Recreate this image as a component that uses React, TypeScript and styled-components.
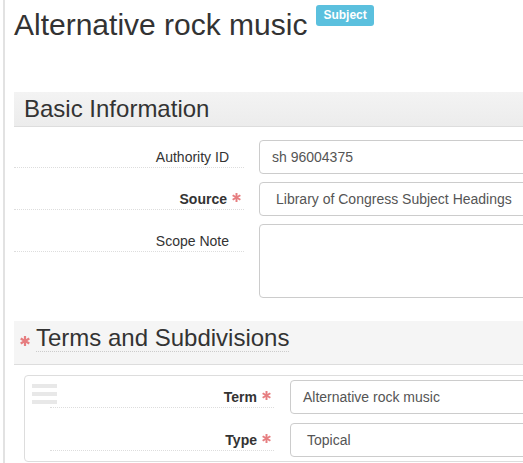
import styled, { createGlobalStyle } from "styled-components";

const GlobalStyle = createGlobalStyle`
  html, body {
    margin: 0;
    padding: 0;
    background: #fff;
    overflow: hidden;
  }
  body {
    font-family: "Liberation Sans", Arial, sans-serif;
    font-size: 14px;
    color: #333;
  }
`;

// clips the wide form at the window edge, like the original page
const Frame = styled.div`
  width: 100vw;
  height: 100vh;
  overflow: hidden;
`;

const Page = styled.div`
  margin-left: 3px;
  border-left: 2px solid #e2e2e2;
  padding: 5px 0 0 9px;
  width: 760px;
  min-height: 463px;
  box-sizing: border-box;
`;

const TitleRow = styled.div`
  display: flex;
  align-items: flex-start;
`;

const Title = styled.h2`
  margin: 3px 0 0;
  font-size: 30px;
  font-weight: normal;
  line-height: 33px;
  color: #333;
`;

const Badge = styled.span`
  margin-left: 9px;
  padding: 3px 7px 4px;
  line-height: 14px;
  font-size: 12px;
  font-weight: bold;
  color: #fff;
  background: #5bc0de;
  border-radius: 3px;
`;

const SectionHeader = styled.div<{ $tone: "basic" | "terms" }>`
  margin-top: ${(p) => (p.$tone === "basic" ? "51px" : "23px")};
  padding: ${(p) => (p.$tone === "basic" ? "4px 10px" : "4px 10px 12px 6px")};
  background: ${(p) =>
    p.$tone === "basic" ? "linear-gradient(#f3f3f3, #ececec)" : "#f5f5f5"};
  border-bottom: 1px solid #ddd;
  display: flex;
  align-items: baseline;
`;

const SectionTitle = styled.h3<{ $underline?: boolean }>`
  margin: 0;
  font-size: 24px;
  font-weight: normal;
  line-height: 26px;
  color: #333;
  border-bottom: ${(p) => (p.$underline ? "1px dotted #ccc" : "none")};
`;

const FormGrid = styled.div<{ $labelWidth: number; $gap: number; $rowGap: number }>`
  display: grid;
  grid-template-columns: ${(p) => p.$labelWidth}px 1fr;
  column-gap: ${(p) => p.$gap}px;
  row-gap: ${(p) => p.$rowGap}px;
`;

const BasicForm = styled(FormGrid)`
  padding-top: 13px;
`;

const Label = styled.label<{ $required?: boolean }>`
  align-self: start;
  padding: 7px ${(p) => (p.$required ? "3px" : "15px")} 0 0;
  line-height: 20px;
  text-align: right;
  font-weight: ${(p) => (p.$required ? "bold" : "normal")};
  border-bottom: 1px dotted #ddd;
  color: #333;
`;

const Field = styled.div<{ $select?: boolean }>`
  height: 34px;
  box-sizing: border-box;
  padding: 6px ${(p) => (p.$select ? "16px" : "12px")};
  line-height: 20px;
  border: 1px solid #ccc;
  border-radius: 4px;
  color: #555;
  white-space: nowrap;
  overflow: hidden;
`;

const TextArea = styled(Field)`
  height: 74px;
`;

const StarIcon = styled.svg<{ $inHeader?: boolean }>`
  flex: none;
  vertical-align: ${(p) => (p.$inHeader ? "-1px" : "2px")};
  margin: ${(p) => (p.$inHeader ? "0 6px 0 0" : "0 0 0 5px")};
`;

const Card = styled.div`
  position: relative;
  margin: 10px 10px 0;
  padding: 4px 0 4px 25px;
  border: 1px solid #ddd;
  border-radius: 4px;
`;

const DragHandle = styled.div`
  position: absolute;
  top: 8px;
  left: 7px;
  width: 25px;
  display: flex;
  flex-direction: column;
  gap: 4px;
`;

const HandleBar = styled.span`
  display: block;
  height: 4px;
  background: #e8e8e8;
`;

const Star = ({ size, inHeader }: { size: number; inHeader?: boolean }) => (
  <StarIcon $inHeader={inHeader} width={size} height={size} viewBox="0 0 10 10">
    <g stroke="#e67e80" strokeWidth="2.2">
      <line x1="5" y1="0" x2="5" y2="10" />
      <line x1="0.7" y1="2.5" x2="9.3" y2="7.5" />
      <line x1="0.7" y1="7.5" x2="9.3" y2="2.5" />
    </g>
  </StarIcon>
);

const App = () => {
  return (
    <>
      <GlobalStyle />
      <Frame>
        <Page>
          <TitleRow>
            <Title>Alternative rock music</Title>
            <Badge>Subject</Badge>
          </TitleRow>

          {/* Basic Information */}
          <SectionHeader $tone="basic">
            <SectionTitle>Basic Information</SectionTitle>
          </SectionHeader>
          <BasicForm $labelWidth={230} $gap={15} $rowGap={8}>
            <Label>Authority ID</Label>
            <Field>sh 96004375</Field>

            <Label $required>
              Source
              <Star size={9} />
            </Label>
            <Field $select>Library of Congress Subject Headings</Field>

            <Label>Scope Note</Label>
            <TextArea />
          </BasicForm>

          {/* Terms and Subdivisions */}
          <SectionHeader $tone="terms">
            <Star size={10} inHeader />
            <SectionTitle $underline>Terms and Subdivisions</SectionTitle>
          </SectionHeader>
          <Card>
            <DragHandle>
              <HandleBar />
              <HandleBar />
              <HandleBar />
            </DragHandle>
            <FormGrid $labelWidth={224} $gap={16} $rowGap={9}>
              <Label $required>
                Term
                <Star size={9} />
              </Label>
              <Field>Alternative rock music</Field>

              <Label $required>
                Type
                <Star size={9} />
              </Label>
              <Field $select>Topical</Field>
            </FormGrid>
          </Card>
        </Page>
      </Frame>
    </>
  );
};

export default App;
